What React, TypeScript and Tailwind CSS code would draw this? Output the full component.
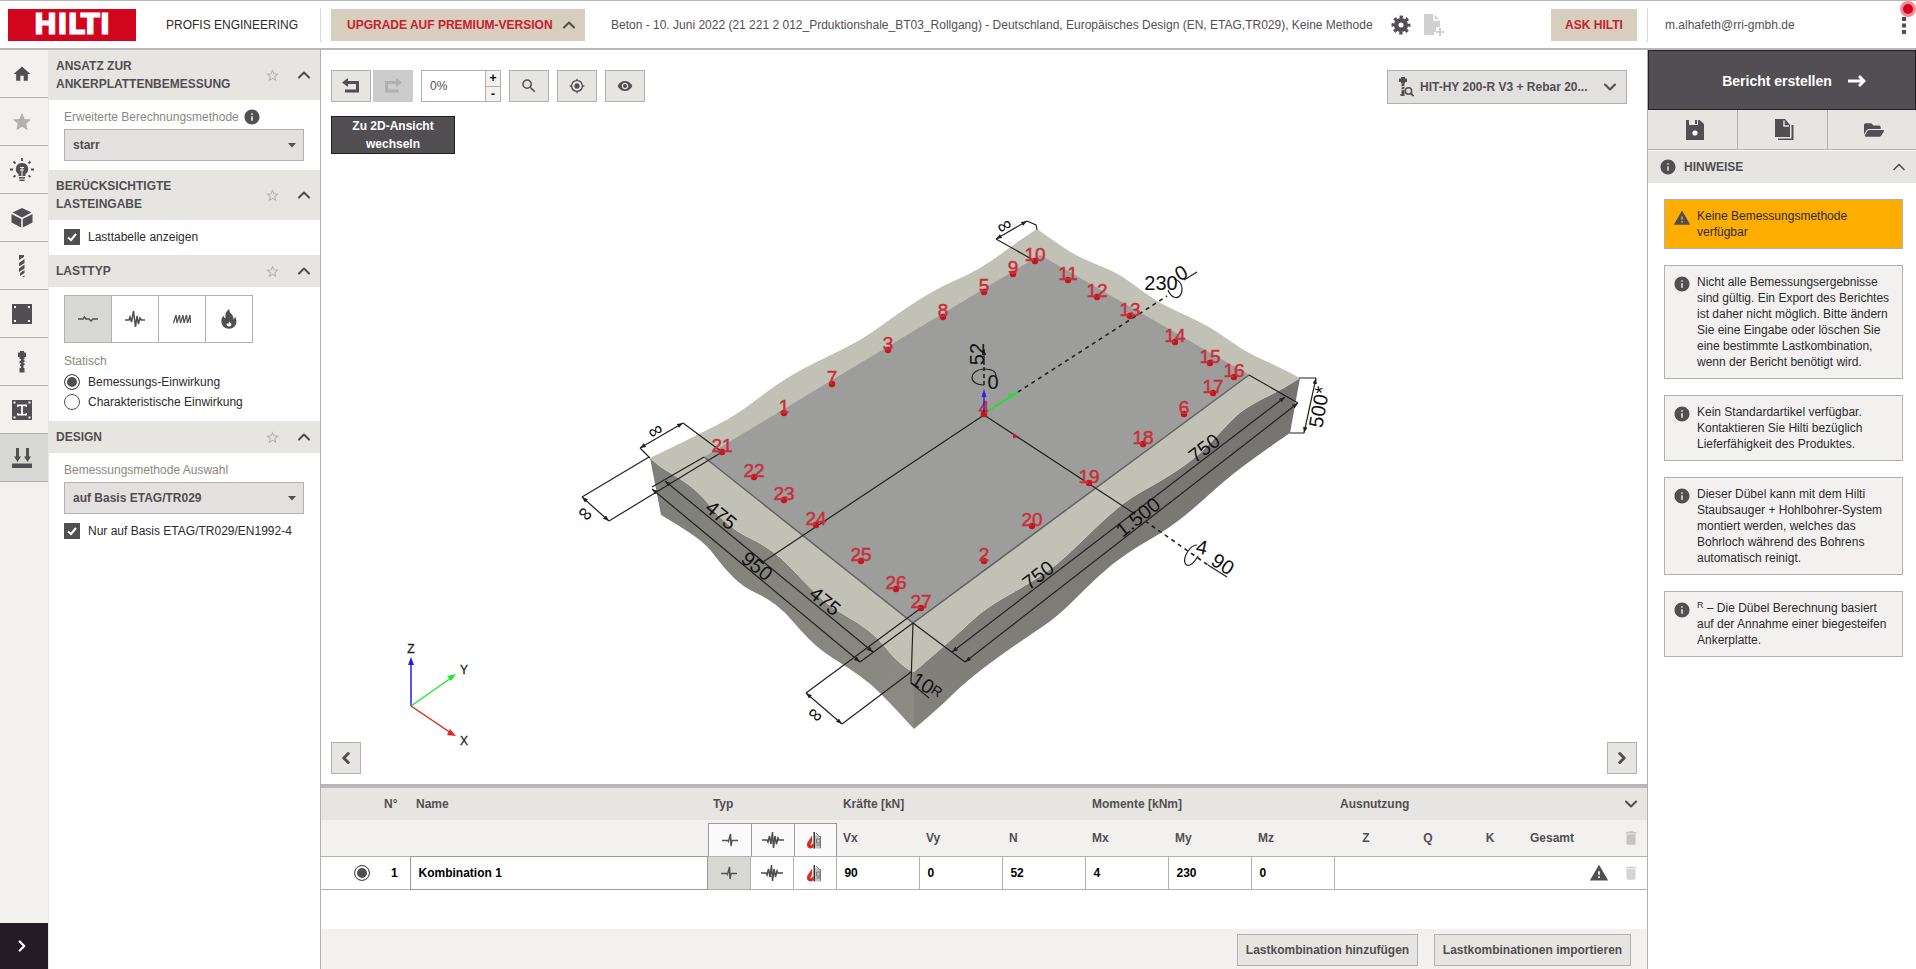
import { useState } from 'react';
import type { ReactNode } from 'react';
import { ChevronDown, ChevronLeft, ChevronRight, ChevronUp } from 'lucide-react';
import { FaFolderOpen } from 'react-icons/fa';
import {
  MdDelete,
  MdHome,
  MdInfo,
  MdMyLocation,
  MdSearch,
  MdStar,
  MdStarBorder,
  MdVisibility,
  MdWarning,
} from 'react-icons/md';

type Point = [number, number];

const ink = '#524f53';

/* ---------- icons ---------- */

const GearIcon = () => (
  <svg width="20" height="20" viewBox="0 0 20 20" fill="none" stroke={ink}>
    <circle cx="10" cy="10" r="4.800" strokeWidth="4.600" />
    <circle cx="10" cy="10" r="8" strokeWidth="3" strokeDasharray="3.300 2.983" strokeDashoffset="1.650" />
  </svg>
);

const DocPlusIcon = () => (
  <svg width="20" height="22" viewBox="0 0 20 22" fill="#d0d0d0">
    <path d="M0 0h10l6 6v7h-4v5h-2v3H0z" />
    <path d="M10 0v6h6" fill="none" stroke="#fff" strokeWidth="1.500" />
    <path d="M15 14h2v3h3v2h-3v3h-2v-3h-3v-2h3z" />
  </svg>
);

const BulbIcon = () => (
  <svg width="24" height="24" viewBox="0 0 24 24" fill={ink}>
    <path d="M12 5a6 6 0 0 0-3.500 11v2h7v-2A6 6 0 0 0 12 5z" />
    <path d="M9 19h6v1.500H9zM9.500 21.500h5V23h-5z" />
    <path d="M12 0v3M3.500 3.500l2 2M20.500 3.500l-2 2M0 11.500h3M21 11.500h3M3.500 19l2-1.500M20.500 19l-2-1.500" stroke={ink} strokeWidth="1.800" />
    <path d="M10 9.500h4M10 12h4M12 9.500V18" stroke="#f2f1f0" strokeWidth="1" />
  </svg>
);

const CubeIcon = () => (
  <svg width="22" height="20" viewBox="0 0 22 20" fill={ink}>
    <path d="M11 0l9.500 4.500L11 9.500 1.500 4.500z" />
    <path d="M.5 6l9.700 5v8.500L.5 14.500zM21.500 6l-9.700 5v8.500l9.700-5z" />
  </svg>
);

const DrillIcon = () => (
  <svg width="8" height="24" viewBox="0 0 8 24" fill={ink}>
    <path d="M1 1h5v2L1 6zM6.500 5v4L1 12.500V9zM6.500 10.500v4L1 18v-3.500zM6.500 16v3L2 22v-3zM4 23l2.500-1.500V23z" />
  </svg>
);

const PlateIcon = () => (
  <svg width="20" height="20" viewBox="0 0 20 20">
    <path d="M0 0h20v20H0z" fill={ink} />
    <path d="M2 2h2v2H2zM16 2h2v2h-2zM2 16h2v2H2zM16 16h2v2h-2z" fill="#fff" />
  </svg>
);

const BoltIcon = () => (
  <svg width="8" height="22" viewBox="0 0 8 22" fill={ink}>
    <path d="M2 0h4v1.500h2V6H6.500v2h-5V6H0V1.500h2z" />
    <path d="M1.500 10l5-1.500v2.500l-5 1.500zM2 13.500l4.500-1.500v2L2 15.500zM1.500 17h5v4.500h-5z" />
    <path d="M3 8h2.500v10H3z" />
  </svg>
);

const ProfileIcon = () => (
  <svg width="20" height="20" viewBox="0 0 20 20">
    <path d="M0 0h20v20H0z" fill={ink} />
    <path d="M1.500 1.500h2v2h-2zM16.500 1.500h2v2h-2zM1.500 16.500h2v2h-2zM16.500 16.500h2v2h-2zM5 4.500h10V7h-1l-.5-.8h-2.600v7.600h2.600L14 13h1v2.500H5V13h1l.5.8h2.600V6.200H6.500L6 7H5z" fill="#fff" />
  </svg>
);

const LoadIcon = () => (
  <svg width="20" height="20" viewBox="0 0 20 20" fill={ink}>
    <path d="M4 0h3v8.500h2L5.500 14 2 8.500h2zM14 0h3v8.500h2L15.500 14 12 8.500h2zM0 15.500h20V20H0z" />
  </svg>
);

const StaticIcon = () => (
  <svg width="20" height="10" viewBox="0 0 20 10" fill="none" stroke={ink} strokeWidth="1.500">
    <path d="M0 5h5l1.500-2L8 5h3l2 2 2-2h5" />
  </svg>
);

const SeismicIcon = () => (
  <svg width="20" height="20" viewBox="0 0 20 20" fill="none" stroke={ink} strokeWidth="1.500">
    <path d="M0 11h4l1-3 1.500 5L8.500 2l2 16 1.500-11 1.500 8 1.500-6L16.500 11H20" />
  </svg>
);

const FatigueIcon = () => (
  <svg width="18" height="10" viewBox="0 0 18 10" fill="none" stroke={ink} strokeWidth="1.200">
    <path d="M.5 9L3 1l1 8 2.500-8 1 8L10 1l1 8 2.500-8 1 8L17 1l.5 8" />
  </svg>
);

const FlameIcon = () => (
  <svg width="16" height="20" viewBox="0 0 16 20" fill={ink}>
    <path d="M8.500 0C5 2 4 5 4.500 9.500 3.500 9 2.500 8 2.500 6.500.8 8.500 0 11 .5 13.500c.6 3.800 3.500 6.200 7.500 6.200s6.900-2.600 7.400-6.200c.3-2.300-.4-4.500-1.400-6-.2 1.500-.8 2.300-1.500 3C12.700 7 11 5.500 9.500 4c-.9-1-1.300-2.500-1-4zM8 12.500c1 1 2.600 1.800 2.400 3.300-.2 1-1.200 1.600-2.400 1.600s-2.400-.7-2.400-1.900c0-.6.300-1 .6-1.300.3.500.7.700 1.100.6.500-.5.800-1.200.7-2.300z" fillRule="evenodd" />
  </svg>
);

const UndoIcon = ({ color, flip }: { color: string; flip?: boolean }) => (
  <svg width="18" height="16" viewBox="0 0 18 16" className={flip ? '-scale-x-100' : ''}>
    <path d="M5 4.500h10.500v8.500H3" fill="none" stroke={color} strokeWidth="3" />
    <path d="M0 4.500L6 0v9z" fill={color} />
  </svg>
);

const ArrowIcon = () => (
  <svg width="18" height="14" viewBox="0 0 18 14" fill="none" stroke="currentColor" strokeWidth="2.800">
    <path d="M0 7h16M11 2l5 5-5 5" />
  </svg>
);

const AnchorSearchIcon = () => (
  <svg width="16" height="20" viewBox="0 0 16 20" fill={ink}>
    <path d="M3 0h4v1.500h2V5H7v1.500H3V5H1V1.500h2zM3.500 7l3-.5v2l-3 1zM3.500 10.500l3-1v2l-3 1zM3.500 13.500l3-1V19h-4v-2h1z" />
    <circle cx="10.500" cy="14" r="3.200" fill="none" stroke={ink} strokeWidth="1.500" />
    <path d="M12.500 16l3 3" stroke={ink} strokeWidth="1.800" />
  </svg>
);

const SaveIcon = () => (
  <svg width="18" height="20" viewBox="0 0 18 20">
    <path d="M0 0h3v5h9V0h1.500L18 4v16H0z" fill={ink} />
    <path d="M9 0h2v4H9z" fill={ink} />
    <circle cx="9" cy="13" r="2.600" fill="#fff" />
  </svg>
);

const CopyIcon = () => (
  <svg width="20" height="22" viewBox="0 0 20 22" fill={ink}>
    <path d="M0 0h10l5 6v12H0z" />
    <path d="M9 1.500V7h5" fill="none" stroke="#e6e5e1" strokeWidth="1.500" />
    <path d="M16.500 6v13.500H3V21h15.500V6z" />
  </svg>
);

const PulseIcon = () => (
  <svg width="16" height="14" viewBox="0 0 16 14" fill="none" stroke="#555" strokeWidth="1.500">
    <path d="M0 7.500h5.500l1 1L8.500 1l.5 12 1-5.500h6" />
  </svg>
);

const WaveIcon = () => (
  <svg width="22" height="18" viewBox="0 0 22 18" fill="none" stroke="#4d4d4d" strokeWidth="1.500">
    <path d="M0 9h5l1 2 1.500-6L9 13l1.500-12 1 16L13 5l1.500 8L16 7l1 2h5" />
  </svg>
);

const FireWallIcon = () => (
  <svg width="16" height="18" viewBox="0 0 16 18">
    <path d="M4.500 4.500C4 8 0 10 0 14c0 2 1.700 3.500 3.700 3.500 1.500 0 2.500-.7 2.800-2V12L4.500 14c-.5.500-1 .2-.8-.5C4.500 12 6.300 9 4.500 4.500z" fill="#e02820" />
    <path d="M6.500 1H8v16.500H6.500z" fill="#333" />
    <path d="M8 4l6 1v12.500H8z" fill="#c4c4c4" />
    <path d="M9.500 8h3.500v4H9.500zM9.500 14H13M9 2l4 4M13.500 5v12" fill="none" stroke="#777" />
  </svg>
);

/* ---------- small controls ---------- */

const CheckBox = ({ id, label }: { id: string; label: string }) => {
  const [checked, setChecked] = useState(true);
  return (
    <div className="flex items-center gap-2">
      <span className="grid">
        <input
          id={id}
          type="checkbox"
          checked={checked}
          onChange={(e) => setChecked(e.target.checked)}
          className="col-start-1 row-start-1 size-4 appearance-none border border-[#524f53] bg-white checked:bg-[#524f53]"
        />
        <svg viewBox="0 0 16 16" className="pointer-events-none col-start-1 row-start-1 size-4" fill="none" stroke="#fff" strokeWidth="2">
          <path d="M4 8.500L7 11l5-6" />
        </svg>
      </span>
      <label htmlFor={id} className="text-[#2b2a2b]">{label}</label>
    </div>
  );
};

const Select = ({ id, options }: { id: string; options: string[] }) => (
  <div className="grid">
    <select
      id={id}
      className="col-start-1 row-start-1 h-8 appearance-none border border-[#b2b1b1] bg-[#e2e1df] pl-2 pr-8 font-bold text-[#524f53]"
    >
      {options.map((o) => <option key={o}>{o}</option>)}
    </select>
    <svg width="8" height="5" viewBox="0 0 8 5" className="pointer-events-none col-start-1 row-start-1 mr-2 self-center justify-self-end" fill={ink}>
      <path d="M0 0h8L4 4.500z" />
    </svg>
  </div>
);

const Section = ({ title, children }: { title: string; children: ReactNode }) => (
  <section>
    <div className="flex items-center bg-[#e6e5e1] py-[7px] pl-[7px] pr-[6px]">
      <h2 className="w-[190px] font-bold leading-[18px] text-[#524f53]">{title}</h2>
      <button aria-label="Favorit" className="ml-auto mr-[14px] text-[#b2b1b1]"><MdStarBorder size={15} /></button>
      <button aria-label="Einklappen" className="-my-px text-[#524f53]"><ChevronUp size={20} strokeWidth={2.500} /></button>
    </div>
    <div className="pl-[15px] pr-4">{children}</div>
  </section>
);

const ToolButton = ({ label, children }: { label: string; children: ReactNode }) => (
  <button aria-label={label} className="flex h-8 w-10 items-center justify-center border border-[#b2b1b1] bg-[#e6e5e1] text-[#524f53]">
    {children}
  </button>
);

const Note = ({ warning, children }: { warning?: boolean; children: ReactNode }) => (
  <div className={`flex gap-[6px] border border-[#b2b1b1] p-2 text-[#2b2a2b] ${warning ? 'bg-[#ffae00]' : 'bg-[#f2f1f0]'}`}>
    {warning
      ? <MdWarning size={18} className="mt-px shrink-0 text-[#524f53]" />
      : <MdInfo size={18} className="mt-px shrink-0 text-[#524f53]" />}
    <p className="leading-4">{children}</p>
  </div>
);

/* ---------- 3D model ---------- */

const leftTop: Point[] = [[650, 458], [677, 445], [703, 432], [727, 420], [747, 407], [773, 387], [800, 370], [827, 357], [857, 342], [877, 329], [907, 307], [940, 287], [970, 274], [993, 260], [1020, 240], [1037, 229]];
const topRight: Point[] = [[1037, 229], [1057, 243], [1073, 254], [1093, 263], [1117, 273], [1133, 284], [1157, 302], [1183, 314], [1210, 327], [1230, 341], [1250, 354], [1277, 366], [1300, 378]];
const rightFront: Point[] = [[1300, 378], [1283, 389], [1260, 400], [1240, 412], [1227, 425], [1207, 447], [1190, 462], [1163, 480], [1130, 498], [1107, 517], [1080, 543], [1057, 565], [1030, 583], [1000, 600], [980, 613], [960, 632], [943, 647], [914, 672]];
const rightBottom: Point[] = [[914, 729], [940, 707], [960, 687], [987, 665], [1027, 637], [1057, 617], [1087, 587], [1113, 563], [1140, 545], [1163, 532], [1190, 512], [1225, 480], [1258, 455], [1290, 433]];
const frontLeft: Point[] = [[914, 672], [908, 670], [893, 657], [877, 637], [857, 622], [830, 607], [810, 588], [793, 570], [780, 557], [760, 543], [737, 532], [717, 515], [703, 497], [687, 483], [660, 467], [650, 458]];
const leftBottom: Point[] = [[661, 515], [683, 528], [707, 545], [723, 567], [743, 587], [767, 598], [785, 612], [800, 630], [820, 650], [847, 667], [870, 683], [890, 703], [914, 729]];

// rounds off the inner points of an edge, both ends stay sharp
const wave = (pts: Point[]) => {
  const parts = [`L${pts[0].join(' ')}`];
  for (let i = 1; i < pts.length - 1; i++) {
    const [x, y] = pts[i];
    const [nx, ny] = pts[i + 1];
    parts.push(`Q${x} ${y} ${(x + nx) / 2} ${(y + ny) / 2}`);
  }
  parts.push(`L${pts[pts.length - 1].join(' ')}`);
  return parts.join('');
};

const anchors: [number, number, number][] = [
  [1, 784, 413], [2, 984, 561], [3, 888, 350], [4, 984, 414], [5, 984, 292], [6, 1184, 414],
  [7, 832, 384], [8, 943, 317], [9, 1013, 274], [10, 1035, 261], [11, 1068, 280], [12, 1097, 297],
  [13, 1130, 316], [14, 1175, 342], [15, 1210, 363], [16, 1234, 377], [17, 1213, 393], [18, 1143, 444],
  [19, 1089, 483], [20, 1032, 526], [21, 722, 452], [22, 754, 477], [23, 784, 500], [24, 816, 525],
  [25, 861, 561], [26, 896, 589], [27, 921, 608],
];

const dimensions: { text: string; x: number; y: number; angle: number; size?: number }[] = [
  { text: '∞', x: 1004, y: 225, angle: -30 },
  { text: '∞', x: 655, y: 430, angle: -30 },
  { text: '∞', x: 586, y: 513, angle: 40 },
  { text: '∞', x: 816, y: 714, angle: 40 },
  { text: '475', x: 721, y: 515, angle: 39 },
  { text: '950', x: 757, y: 566, angle: 39 },
  { text: '475', x: 825, y: 601, angle: 39 },
  { text: '750', x: 1038, y: 575, angle: -37 },
  { text: '1.500', x: 1138, y: 517, angle: -38 },
  { text: '750', x: 1204, y: 448, angle: -37 },
  { text: '500*', x: 1319, y: 407, angle: -80 },
  { text: '230', x: 1161, y: 283, angle: 0 },
  { text: '0', x: 1181, y: 273, angle: -30 },
  { text: '52', x: 977, y: 354, angle: -90 },
  { text: '0', x: 993, y: 382, angle: 0 },
  { text: '4', x: 1202, y: 547, angle: 12 },
  { text: '90', x: 1223, y: 564, angle: 32 },
  { text: '10', x: 923, y: 683, angle: 32 },
  { text: 'R', x: 937, y: 691, angle: 32, size: 14 },
];

const Model = () => (
  <svg viewBox="321 50 1326 734" className="col-start-1 row-start-1 h-full min-h-0 w-full" fontFamily="Liberation Sans, Arial, sans-serif">
    <defs>
      <linearGradient id="faceLeft" x1="0" y1="0" x2="1" y2="1">
        <stop offset="0" stopColor="#7f7f79" />
        <stop offset="1" stopColor="#8b8b83" />
      </linearGradient>
      <linearGradient id="faceRight" x1="0" y1="1" x2="1" y2="0">
        <stop offset="0" stopColor="#82817b" />
        <stop offset="1" stopColor="#74736f" />
      </linearGradient>
      <marker id="tip" viewBox="0 0 8 6" refX="8" refY="3" markerWidth="5" markerHeight="4" orient="auto-start-reverse">
        <path d="M0 0l8 3-8 3z" fill="#222" />
      </marker>
    </defs>

    <path d={`M650 458${wave(leftBottom)}L914 672${wave(frontLeft)}z`} fill="url(#faceLeft)" />
    <path d={`M914 672${wave(rightBottom)}${wave(rightFront)}z`} fill="url(#faceRight)" />
    <path d={`M650 458${wave(leftTop)}${wave(topRight)}${wave(rightFront)}${wave(frontLeft)}z`} fill="#c1c1b5" />
    <path d="M704 457L1040 255l209 120-336 248z" fill="#9d9d9c" />
    <path d="M704 457l209 166 336-248" fill="none" stroke="#626262" strokeWidth="1.500" />

    <g fill="none" stroke="#222" strokeWidth="1.200">
      <path d="M984 415L763 562M984 415l148 97" />
      <path d="M704 457l-52 30M722 452L609 521M649 457l-67 40M683 423l39 29M640 448l10 10" />
      <path d="M996 239l39 22M1027 221l9 4 1 5M1299 378h17M1290 433h14" />
      <path d="M1249 375l49 28M913 623l52 39M913 623l-53 39M921 608l-115 85M911 672l-69 52" />
      <path d="M913 623l-2 60 18 15" />
      <g markerStart="url(#tip)" markerEnd="url(#tip)">
        <path d="M665 481l208 171" />
        <path d="M652 489l208 173" />
        <path d="M582 497l27 24" />
        <path d="M640 448l43-25" />
        <path d="M996 239l31-18" />
        <path d="M1316 378l-12 55" />
        <path d="M1285 397L952 652" />
        <path d="M1298 403L965 662" />
        <path d="M806 693l36 31" />
      </g>
      <path d="M1018 392l149-96M1132 512l76 53" strokeWidth="1.600" strokeDasharray="4 4" />
      <path d="M984 385v-22" strokeWidth="1.600" strokeDasharray="4 3" />
      <path d="M1184 280l13-8M1208 565l19 12M984 365v-16" markerEnd="url(#tip)" />
      <path d="M984 385c-16 0-16-15 0-16 8 0 12 3 12 7" />
      <path d="M1168 290c3 8 10 10 13 4 3-7-1-14-7-15" />
      <path d="M1198 556c-5 9-11 12-13 7-2-6 5-18 12-18" />
    </g>

    <g fill="#c4141c">
      {anchors.map(([n, x, y]) => (
        <g key={n}>
          <circle cx={x} cy={y} r="3.200" />
          <text x={x} y={y} fontSize="19" textAnchor="middle" fill="#c92f39" stroke="#c92f39" strokeWidth="0.500">{n}</text>
        </g>
      ))}
    </g>

    <path d="M984 412v-18" stroke="#2a22e0" strokeWidth="1.500" />
    <path d="M981.500 397l2.500-8 2.500 8z" fill="#2a22e0" />
    <path d="M988 411l30-19" stroke="#25e02d" strokeWidth="2" />
    <path d="M1008 395l10-3-7 7z" fill="#25e02d" />
    <path d="M1013 433l6 4-6 1z" fill="#c4141c" />

    {dimensions.map((d, i) => (
      <text
        key={i}
        x={d.x}
        y={d.y}
        fontSize={d.size ?? 20}
        textAnchor="middle"
        dominantBaseline="central"
        transform={`rotate(${d.angle} ${d.x} ${d.y})`}
        fill="#111"
      >
        {d.text}
      </text>
    ))}

    <g strokeWidth="1.500">
      <path d="M411 706v-44" stroke="#2020e0" />
      <path d="M408 665l3-8 3 8z" fill="#2020e0" />
      <path d="M411 706l40-28" stroke="#20e830" />
      <path d="M447 676l9-2-5 7z" fill="#20e830" />
      <path d="M411 706l40 27" stroke="#e82020" />
      <path d="M450 729l6 7-9-1z" fill="#e82020" />
    </g>
    <g fontSize="12" fill="#222" stroke="#222" strokeWidth="0.300" textAnchor="middle">
      <text x="411" y="653">Z</text>
      <text x="464" y="674">Y</text>
      <text x="464" y="745">X</text>
    </g>
  </svg>
);

/* ---------- page ---------- */

const rail = [
  { label: 'Start', icon: <MdHome size={20} color={ink} /> },
  { label: 'Favoriten', icon: <MdStar size={22} color="#b2b1b1" /> },
  { label: 'Anwendung', icon: <BulbIcon /> },
  { label: 'Untergrund', icon: <CubeIcon /> },
  { label: 'Montage', icon: <DrillIcon /> },
  { label: 'Ankerplatte', icon: <PlateIcon /> },
  { label: 'Dübel', icon: <BoltIcon /> },
  { label: 'Profil', icon: <ProfileIcon /> },
  { label: 'Lasten', icon: <LoadIcon /> },
];

const loadTypes = [
  { label: 'Statisch', icon: <StaticIcon /> },
  { label: 'Seismisch', icon: <SeismicIcon /> },
  { label: 'Ermüdung', icon: <FatigueIcon /> },
  { label: 'Brand', icon: <FlameIcon /> },
];

const combinationTypes = [
  { label: 'Statisch', icon: <PulseIcon /> },
  { label: 'Seismisch', icon: <WaveIcon /> },
  { label: 'Brand', icon: <FireWallIcon /> },
];

const loads = [
  { name: 'Vx', value: '90' },
  { name: 'Vy', value: '0' },
  { name: 'N', value: '52' },
  { name: 'Mx', value: '4' },
  { name: 'My', value: '230' },
  { name: 'Mz', value: '0' },
];

const Header = () => (
  <header className="flex h-[50px] shrink-0 items-center border-b-2 border-t border-b-[#b9b8b8] border-t-[#b9b8b8] pt-px text-[#524f53]">
    <div className="flex h-[34px] w-[321px] shrink-0 items-center border-r border-[#d8d8d8] pl-2">
      <div className="flex h-8 w-32 items-center justify-center bg-[#d2051e] font-['DejaVu_Sans',sans-serif] text-[28px] font-bold text-white [-webkit-text-stroke:1px_white]">
        HILTI
      </div>
      <span className="ml-[30px] whitespace-nowrap text-[#2b2a2b]">PROFIS ENGINEERING</span>
    </div>
    <button className="ml-[10px] flex h-8 w-[254px] shrink-0 items-center gap-[6px] bg-[#d7cebd] pl-4 font-bold text-[#c8202f]">
      UPGRADE AUF PREMIUM-VERSION
      <ChevronUp size={20} strokeWidth={2.500} color={ink} />
    </button>
    <p className="ml-[26px] truncate">
      Beton - 10. Juni 2022 (21 221 2 012_Prduktionshale_BT03_Rollgang) - Deutschland, Europäisches Design (EN, ETAG,TR029), Keine Methode
    </p>
    <button aria-label="Einstellungen" className="ml-[18px]"><GearIcon /></button>
    <button aria-label="Neues Dokument" className="ml-[13px]"><DocPlusIcon /></button>
    <button className="ml-auto mr-[10px] h-8 w-[86px] shrink-0 bg-[#d7cebd] font-bold text-[#c8202f]">ASK HILTI</button>
    <div className="flex h-[34px] w-[269px] shrink-0 items-center justify-between border-l border-[#d8d8d8] pl-[17px] pr-1">
      <span>m.alhafeth@rri-gmbh.de</span>
      <button aria-label="Menü" className="relative flex h-8 w-4 items-center justify-center">
        <svg width="4" height="17" viewBox="0 0 4 17" fill={ink}>
          <path d="M0 0h4v4H0zM0 6.500h4v4H0zM0 13h4v4H0z" />
        </svg>
        <span className="absolute -right-1 -top-2 size-4 rounded-full border-3 border-[#f58a96] bg-[#d2051e]" />
      </button>
    </div>
  </header>
);

const Sidebar = () => {
  const [loadType, setLoadType] = useState('Statisch');
  const [action, setAction] = useState('Bemessungs-Einwirkung');

  return (
    <aside className="flex w-[321px] shrink-0 border-r border-[#b2b1b1]">
      <nav className="flex w-12 shrink-0 flex-col bg-[#f2f1f0]">
        {rail.map(({ label, icon }) => (
          <button
            key={label}
            aria-label={label}
            className={`flex h-12 w-12 items-center justify-center border-b border-[#b2b1b1] pr-1 pt-px ${label === 'Lasten' ? 'bg-[#d7d8d3]' : ''}`}
          >
            {icon}
          </button>
        ))}
        <button aria-label="Aufklappen" className="mt-auto flex h-[46px] items-center justify-center bg-[#241c25] pr-1 text-white">
          <ChevronRight size={18} strokeWidth={3} />
        </button>
      </nav>
      <div className="flex-1 border-l border-[#e6e5e1]">
        <Section title="ANSATZ ZUR ANKERPLATTENBEMESSUNG">
          <div className="flex h-[29px] items-end gap-1 pb-[3px] text-[#8b8880]">
            <label htmlFor="method">Erweiterte Berechnungsmethode</label>
            <MdInfo size={18} color={ink} />
          </div>
          <Select id="method" options={['starr', 'elastisch']} />
          <div className="h-[9px]" />
        </Section>
        <Section title="BERÜCKSICHTIGTE LASTEINGABE">
          <div className="flex h-[35px] items-center pb-[2px]">
            <CheckBox id="table" label="Lasttabelle anzeigen" />
          </div>
        </Section>
        <Section title="LASTTYP">
          <div className="flex pt-2">
            {loadTypes.map(({ label, icon }) => (
              <button
                key={label}
                aria-label={label}
                onClick={() => setLoadType(label)}
                className={`-mr-px flex size-12 items-center justify-center border border-[#b2b1b1] ${label === loadType ? 'bg-[#d7d8d3]' : 'bg-white'}`}
              >
                {icon}
              </button>
            ))}
          </div>
          <fieldset className="pb-[11px] pt-[9px]">
            <legend className="contents text-[#8b8880]"><span className="block leading-[18px]">Statisch</span></legend>
            <div className="flex flex-col gap-1 pt-1">
              {['Bemessungs-Einwirkung', 'Charakteristische Einwirkung'].map((a) => (
                <label key={a} className="flex items-center gap-2 leading-4 text-[#2b2a2b]">
                  <input
                    type="radio"
                    name="action"
                    checked={a === action}
                    onChange={() => setAction(a)}
                    className="size-4 appearance-none rounded-full border border-[#524f53] checked:bg-[#524f53] checked:shadow-[inset_0_0_0_2px_#fff]"
                  />
                  {a}
                </label>
              ))}
            </div>
          </fieldset>
        </Section>
        <Section title="DESIGN">
          <div className="flex h-[29px] items-end pb-[3px] text-[#8b8880]">
            <label htmlFor="design">Bemessungsmethode Auswahl</label>
          </div>
          <Select id="design" options={['auf Basis ETAG/TR029', 'EN 1992-4']} />
          <div className="flex h-[34px] items-center">
            <CheckBox id="only" label="Nur auf Basis ETAG/TR029/EN1992-4" />
          </div>
        </Section>
      </div>
    </aside>
  );
};

const Viewer = () => (
  <div className="grid min-h-0 flex-1 grid-cols-1 grid-rows-1">
    <Model />
    <div className="z-10 col-start-1 row-start-1 flex flex-col justify-between pb-[10px] pl-[10px] pr-[10px] pt-5">
      <div className="flex items-start justify-between pr-[10px]">
        <div>
          <div className="flex gap-2">
            <div className="flex gap-[2px]">
              <ToolButton label="Rückgängig"><UndoIcon color={ink} /></ToolButton>
              <button aria-label="Wiederholen" disabled className="flex h-8 w-10 items-center justify-center bg-[#cccccc]">
                <UndoIcon color="#b0b0b0" flip />
              </button>
            </div>
            <div className="flex h-8 w-20 border border-[#b2b1b1] bg-white">
              <input aria-label="Transparenz" defaultValue="0%" className="w-[63px] pl-2 text-[#524f53]" />
              <div className="flex flex-1 flex-col border-l border-[#b2b1b1] bg-[#f2f1f0] font-bold leading-none text-black">
                <button aria-label="Mehr" className="flex-1 border-b border-[#b2b1b1]">+</button>
                <button aria-label="Weniger" className="flex-1">-</button>
              </div>
            </div>
            <ToolButton label="Zoom"><MdSearch size={18} /></ToolButton>
            <ToolButton label="Zentrieren"><MdMyLocation size={16} /></ToolButton>
            <ToolButton label="Ansicht"><MdVisibility size={16} /></ToolButton>
          </div>
          <button className="mt-[14px] h-[38px] w-[124px] border border-[#231f20] bg-[#524f53] px-4 font-bold leading-[18px] text-white">
            Zu 2D-Ansicht wechseln
          </button>
        </div>
        <button className="flex h-[34px] w-60 items-center border border-[#b2b1b1] bg-[#e2e1df] pl-[10px] pr-[6px] font-bold text-[#524f53]">
          <AnchorSearchIcon />
          <span className="ml-[6px]">HIT-HY 200-R V3 + Rebar 20...</span>
          <ChevronDown size={20} strokeWidth={2.500} className="ml-auto" />
        </button>
      </div>
      <div className="flex justify-between">
        <button aria-label="Zurück" className="flex h-8 w-[30px] items-center justify-center border border-[#b2b1b1] bg-[#e6e5e1] text-[#524f53]">
          <ChevronLeft size={18} strokeWidth={4} />
        </button>
        <button aria-label="Weiter" className="flex h-8 w-[30px] items-center justify-center border border-[#b2b1b1] bg-[#e6e5e1] text-[#524f53]">
          <ChevronRight size={18} strokeWidth={4} />
        </button>
      </div>
    </div>
  </div>
);

const LoadTable = () => {
  const [type, setType] = useState('Statisch');

  return (
    <div className="shrink-0 border-t-4 border-[#b9b8b8]">
      <table className="w-full table-fixed border-collapse text-left font-bold text-[#524f53]">
        <colgroup>
          <col className="w-[60px]" />
          <col className="w-[29px]" />
          <col />
          <col className="w-[43px]" />
          <col className="w-[43px]" />
          <col className="w-[43px]" />
          {loads.map((l) => <col key={l.name} className="w-[83px]" />)}
          <col className="w-[62px]" />
          <col className="w-[62px]" />
          <col className="w-[62px]" />
          <col className="w-[62px]" />
          <col className="w-8" />
          <col className="w-8" />
        </colgroup>
        <thead>
          <tr className="h-8 bg-[#e6e5e1]">
            <th />
            <th className="pl-[3px]">N°</th>
            <th className="pl-[6px]">Name</th>
            <th colSpan={3} className="pl-[5px]">Typ</th>
            <th colSpan={3} className="pl-[6px]">Kräfte [kN]</th>
            <th colSpan={3} className="pl-[6px]">Momente [kNm]</th>
            <th colSpan={5} className="pl-[5px]">Ausnutzung</th>
            <th>
              <button aria-label="Tabelle einklappen" className="flex w-full justify-center">
                <ChevronDown size={20} strokeWidth={2.500} />
              </button>
            </th>
          </tr>
          <tr className="h-9 bg-[#f2f1f0]">
            <th colSpan={3} />
            {combinationTypes.map(({ label, icon }) => (
              <th key={label} className="p-0 pt-[3px]">
                <button
                  aria-label={label}
                  className={`flex h-[33px] w-full items-center justify-center border-l border-t border-[#9a9997] bg-[#fafafa] ${label === 'Brand' ? 'border-r' : ''}`}
                >
                  {icon}
                </button>
              </th>
            ))}
            {loads.map((l) => <th key={l.name} className="pl-[6px]">{l.name}</th>)}
            <th className="text-center">Z</th>
            <th className="text-center">Q</th>
            <th className="text-center">K</th>
            <th className="text-center">Gesamt</th>
            <th />
            <th><MdDelete size={18} color="#c4c4c4" className="mx-auto" /></th>
          </tr>
        </thead>
        <tbody>
          <tr className="h-[33px] border-y border-[#b2b1b1] bg-white text-black">
            <td className="pl-[33px]">
              <input
                type="radio"
                name="combination"
                aria-label="Kombination 1 wählen"
                defaultChecked
                className="block size-4 appearance-none rounded-full border border-[#524f53] checked:bg-[#524f53] checked:shadow-[inset_0_0_0_2px_#fff]"
              />
            </td>
            <td className="pl-[10px]">1</td>
            <td className="border border-[#9a9997]">
              <input aria-label="Name" defaultValue="Kombination 1" className="w-full pl-2" />
            </td>
            {combinationTypes.map(({ label, icon }) => (
              <td key={label} className={`border border-[#b2b1b1] p-0 ${label === type ? 'bg-[#d7d8d3]' : ''}`}>
                <button aria-label={label} onClick={() => setType(label)} className="flex h-8 w-full items-center justify-center">
                  {icon}
                </button>
              </td>
            ))}
            {loads.map((l) => (
              <td key={l.name} className="border border-[#b2b1b1]">
                <input aria-label={l.name} defaultValue={l.value} className="w-full pl-[7px]" />
              </td>
            ))}
            <td />
            <td />
            <td />
            <td />
            <td><MdWarning size={20} color={ink} className="mx-auto" /></td>
            <td><MdDelete size={18} color="#d4d4d4" className="mx-auto" /></td>
          </tr>
        </tbody>
      </table>
      <div className="h-[39px]" />
      <div className="flex h-10 items-center justify-end gap-4 bg-[#f2f1f0] pr-4 pt-px font-bold text-[#524f53]">
        <button className="h-8 w-[181px] whitespace-nowrap border border-[#b2b1b1] bg-[#e6e5e1]">Lastkombination hinzufügen</button>
        <button className="h-8 w-[197px] whitespace-nowrap border border-[#b2b1b1] bg-[#e6e5e1]">Lastkombinationen importieren</button>
      </div>
    </div>
  );
};

const Notes = () => (
  <aside className="w-[269px] shrink-0 border-l border-[#b2b1b1]">
    <button className="flex h-[60px] w-full items-center justify-center gap-4 border border-[#231f20] bg-[#524f53] pl-[24px] pt-[2px] text-[14px] font-bold text-white">
      Bericht erstellen
      <ArrowIcon />
    </button>
    <div className="grid h-10 grid-cols-[90px_90px_1fr] divide-x divide-[#b2b1b1] border-b border-[#b2b1b1] bg-[#e6e5e1]">
      <button aria-label="Speichern" className="flex items-center justify-center pl-1"><SaveIcon /></button>
      <button aria-label="Kopieren" className="flex items-center justify-center pl-1"><CopyIcon /></button>
      <button aria-label="Öffnen" className="flex items-center justify-center pl-1"><FaFolderOpen size={20} color={ink} /></button>
    </div>
    <div className="mt-px flex h-8 items-center bg-[#e6e5e1] pl-[11px] pr-[7px] text-[#524f53]">
      <MdInfo size={18} />
      <h2 className="ml-[7px] font-bold">HINWEISE</h2>
      <button aria-label="Einklappen" className="ml-auto"><ChevronUp size={20} strokeWidth={2} /></button>
    </div>
    <div className="flex flex-col gap-4 pb-4 pl-4 pr-[13px] pt-4">
      <Note warning>Keine Bemessungsmethode verfügbar</Note>
      <Note>
        Nicht alle Bemessungsergebnisse sind gültig. Ein Export des Berichtes ist daher nicht möglich. Bitte ändern Sie eine Eingabe oder löschen Sie eine bestimmte Lastkombination, wenn der Bericht benötigt wird.
      </Note>
      <Note>Kein Standardartikel verfügbar. Kontaktieren Sie Hilti bezüglich Lieferfähigkeit des Produktes.</Note>
      <Note>
        Dieser Dübel kann mit dem Hilti Staubsauger + Hohlbohrer-System montiert werden, welches das Bohrloch während des Bohrens automatisch reinigt.
      </Note>
      <Note><sup className="text-[9px]">R</sup> – Die Dübel Berechnung basiert auf der Annahme einer biegesteifen Ankerplatte.</Note>
    </div>
  </aside>
);

export default function App() {
  return (
    <div className="flex h-screen flex-col bg-white font-['Liberation_Sans',Arial,sans-serif] text-[12px]">
      <Header />
      <div className="flex min-h-0 flex-1">
        <Sidebar />
        <main className="flex min-w-0 flex-1 flex-col">
          <Viewer />
          <LoadTable />
        </main>
        <Notes />
      </div>
    </div>
  );
}
